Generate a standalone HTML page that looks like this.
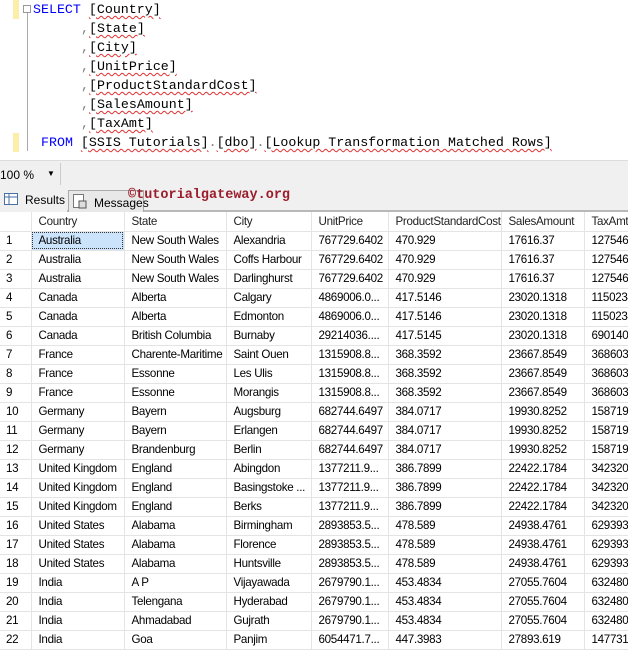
<!DOCTYPE html>
<html><head><meta charset="utf-8"><style>
*{margin:0;padding:0;box-sizing:border-box}
body{width:628px;height:644px;overflow:hidden;background:#fff;font-family:"Liberation Sans",sans-serif;position:relative}
.code{position:absolute;left:0;top:0;width:628px;height:158px;background:#fff}
.gut{position:absolute;left:13px;width:6px;background:#fbeea8}
.ln{position:absolute;font-family:"Liberation Mono",monospace;font-size:13.3px;line-height:19px;white-space:pre;color:#000}
.k{color:#0000ff}.c{color:#808080}
.u{text-decoration:underline wavy #e03030;text-decoration-thickness:1px;text-underline-offset:2px}
.status{position:absolute;top:160px;left:0;width:628px;height:26px;background:#f0f0f0;border-top:1px solid #ddd;font-size:12px}
.tabs{position:absolute;top:186px;left:0;width:628px;height:26px;background:#f0f0f0;border-bottom:2px solid #b8b8b8}
table{position:absolute;top:212px;left:0;width:644px;border-collapse:collapse;font-size:11.6px;table-layout:fixed;letter-spacing:-0.3px}
td{height:19px;padding:0 0 0 7px;border-right:1px solid #e4e4e4;border-bottom:1px solid #e4e4e4;white-space:nowrap;overflow:hidden;color:#000}
tr.h td{background:#fff;color:#222}
td:first-child{padding-left:6px}
</style></head><body>
<div class="code">
<div class="gut" style="top:0;height:19px"></div>
<div class="gut" style="top:133px;height:19px"></div>
<div style="position:absolute;left:23px;top:5px;width:8px;height:8px;border:1px solid #999"></div>
<div style="position:absolute;left:27px;top:13px;width:1px;height:138px;background:#aaa"></div>
<div class="ln" style="left:33px;top:0"><span class="k">SELECT</span> <span class="u">[Country]</span></div>
<div class="ln" style="left:81px;top:19px"><span class="c">,</span><span class="u">[State]</span></div>
<div class="ln" style="left:81px;top:38px"><span class="c">,</span><span class="u">[City]</span></div>
<div class="ln" style="left:81px;top:57px"><span class="c">,</span><span class="u">[UnitPrice]</span></div>
<div class="ln" style="left:81px;top:76px"><span class="c">,</span><span class="u">[ProductStandardCost]</span></div>
<div class="ln" style="left:81px;top:95px"><span class="c">,</span><span class="u">[SalesAmount]</span></div>
<div class="ln" style="left:81px;top:114px"><span class="c">,</span><span class="u">[TaxAmt]</span></div>
<div class="ln" style="left:41px;top:133px"><span class="k">FROM</span> <span class="u">[SSIS Tutorials]</span><span class="c">.</span><span class="u">[dbo]</span><span class="c">.</span><span class="u">[Lookup Transformation Matched Rows]</span></div>
</div>
<div class="status"><span style="position:absolute;left:0;top:7px">100 %</span><span style="position:absolute;left:47px;top:8px;font-size:8px">▼</span><div style="position:absolute;left:60px;top:2px;width:1px;height:22px;background:#ccc"></div></div>
<div class="tabs">
<div style="position:absolute;left:0;top:2px;width:67px;height:24px;background:#f0f0f0"><svg style="position:absolute;left:4px;top:5px" width="14" height="12"><rect x="0.5" y="0.5" width="13" height="11" fill="#fff" stroke="#4a6fa5"/><line x1="0" y1="4" x2="14" y2="4" stroke="#4a6fa5"/><line x1="5" y1="0" x2="5" y2="12" stroke="#4a6fa5"/></svg><span style="position:absolute;left:25px;top:5px;font-size:12px">Results</span></div>
<div style="position:absolute;left:68px;top:4px;width:76px;height:22px;border:1px solid #aaa;border-bottom:none;background:#e8e8e8"><svg style="position:absolute;left:4px;top:3px" width="14" height="15"><rect x="0.5" y="0.5" width="10" height="13" fill="#fff" stroke="#777"/><rect x="6" y="7" width="7" height="7" fill="#ddd" stroke="#555"/></svg><span style="position:absolute;left:25px;top:5px;font-size:12px">Messages</span></div>
<span style="position:absolute;left:128px;top:2px;font-family:'Liberation Mono',monospace;font-weight:bold;font-size:13.5px;color:#9b1c2a">©tutorialgateway.org</span>
</div>
<table>
<colgroup><col style="width:31px"><col style="width:93px"><col style="width:102px"><col style="width:85px"><col style="width:77px"><col style="width:113px"><col style="width:83px"><col style="width:60px"></colgroup>
<tr class="h"><td></td><td>Country</td><td>State</td><td>City</td><td>UnitPrice</td><td>ProductStandardCost</td><td>SalesAmount</td><td>TaxAmt</td></tr>
<tr><td>1</td><td style="background:#cce4fb;outline:1px dotted #333;outline-offset:-2px">Australia</td><td>New South Wales</td><td>Alexandria</td><td>767729.6402</td><td>470.929</td><td>17616.37</td><td>127546.</td></tr>
<tr><td>2</td><td>Australia</td><td>New South Wales</td><td>Coffs Harbour</td><td>767729.6402</td><td>470.929</td><td>17616.37</td><td>127546.</td></tr>
<tr><td>3</td><td>Australia</td><td>New South Wales</td><td>Darlinghurst</td><td>767729.6402</td><td>470.929</td><td>17616.37</td><td>127546.</td></tr>
<tr><td>4</td><td>Canada</td><td>Alberta</td><td>Calgary</td><td>4869006.0...</td><td>417.5146</td><td>23020.1318</td><td>1150234</td></tr>
<tr><td>5</td><td>Canada</td><td>Alberta</td><td>Edmonton</td><td>4869006.0...</td><td>417.5146</td><td>23020.1318</td><td>1150234</td></tr>
<tr><td>6</td><td>Canada</td><td>British Columbia</td><td>Burnaby</td><td>29214036....</td><td>417.5145</td><td>23020.1318</td><td>6901404</td></tr>
<tr><td>7</td><td>France</td><td>Charente-Maritime</td><td>Saint Ouen</td><td>1315908.8...</td><td>368.3592</td><td>23667.8549</td><td>368603.</td></tr>
<tr><td>8</td><td>France</td><td>Essonne</td><td>Les Ulis</td><td>1315908.8...</td><td>368.3592</td><td>23667.8549</td><td>368603.</td></tr>
<tr><td>9</td><td>France</td><td>Essonne</td><td>Morangis</td><td>1315908.8...</td><td>368.3592</td><td>23667.8549</td><td>368603.</td></tr>
<tr><td>10</td><td>Germany</td><td>Bayern</td><td>Augsburg</td><td>682744.6497</td><td>384.0717</td><td>19930.8252</td><td>158719.</td></tr>
<tr><td>11</td><td>Germany</td><td>Bayern</td><td>Erlangen</td><td>682744.6497</td><td>384.0717</td><td>19930.8252</td><td>158719.</td></tr>
<tr><td>12</td><td>Germany</td><td>Brandenburg</td><td>Berlin</td><td>682744.6497</td><td>384.0717</td><td>19930.8252</td><td>158719.</td></tr>
<tr><td>13</td><td>United Kingdom</td><td>England</td><td>Abingdon</td><td>1377211.9...</td><td>386.7899</td><td>22422.1784</td><td>342320.</td></tr>
<tr><td>14</td><td>United Kingdom</td><td>England</td><td>Basingstoke ...</td><td>1377211.9...</td><td>386.7899</td><td>22422.1784</td><td>342320.</td></tr>
<tr><td>15</td><td>United Kingdom</td><td>England</td><td>Berks</td><td>1377211.9...</td><td>386.7899</td><td>22422.1784</td><td>342320.</td></tr>
<tr><td>16</td><td>United States</td><td>Alabama</td><td>Birmingham</td><td>2893853.5...</td><td>478.589</td><td>24938.4761</td><td>629393.</td></tr>
<tr><td>17</td><td>United States</td><td>Alabama</td><td>Florence</td><td>2893853.5...</td><td>478.589</td><td>24938.4761</td><td>629393.</td></tr>
<tr><td>18</td><td>United States</td><td>Alabama</td><td>Huntsville</td><td>2893853.5...</td><td>478.589</td><td>24938.4761</td><td>629393.</td></tr>
<tr><td>19</td><td>India</td><td>A P</td><td>Vijayawada</td><td>2679790.1...</td><td>453.4834</td><td>27055.7604</td><td>632480.</td></tr>
<tr><td>20</td><td>India</td><td>Telengana</td><td>Hyderabad</td><td>2679790.1...</td><td>453.4834</td><td>27055.7604</td><td>632480.</td></tr>
<tr><td>21</td><td>India</td><td>Ahmadabad</td><td>Gujrath</td><td>2679790.1...</td><td>453.4834</td><td>27055.7604</td><td>632480.</td></tr>
<tr><td>22</td><td>India</td><td>Goa</td><td>Panjim</td><td>6054471.7...</td><td>447.3983</td><td>27893.619</td><td>1477316</td></tr>
</table>
</body></html>
